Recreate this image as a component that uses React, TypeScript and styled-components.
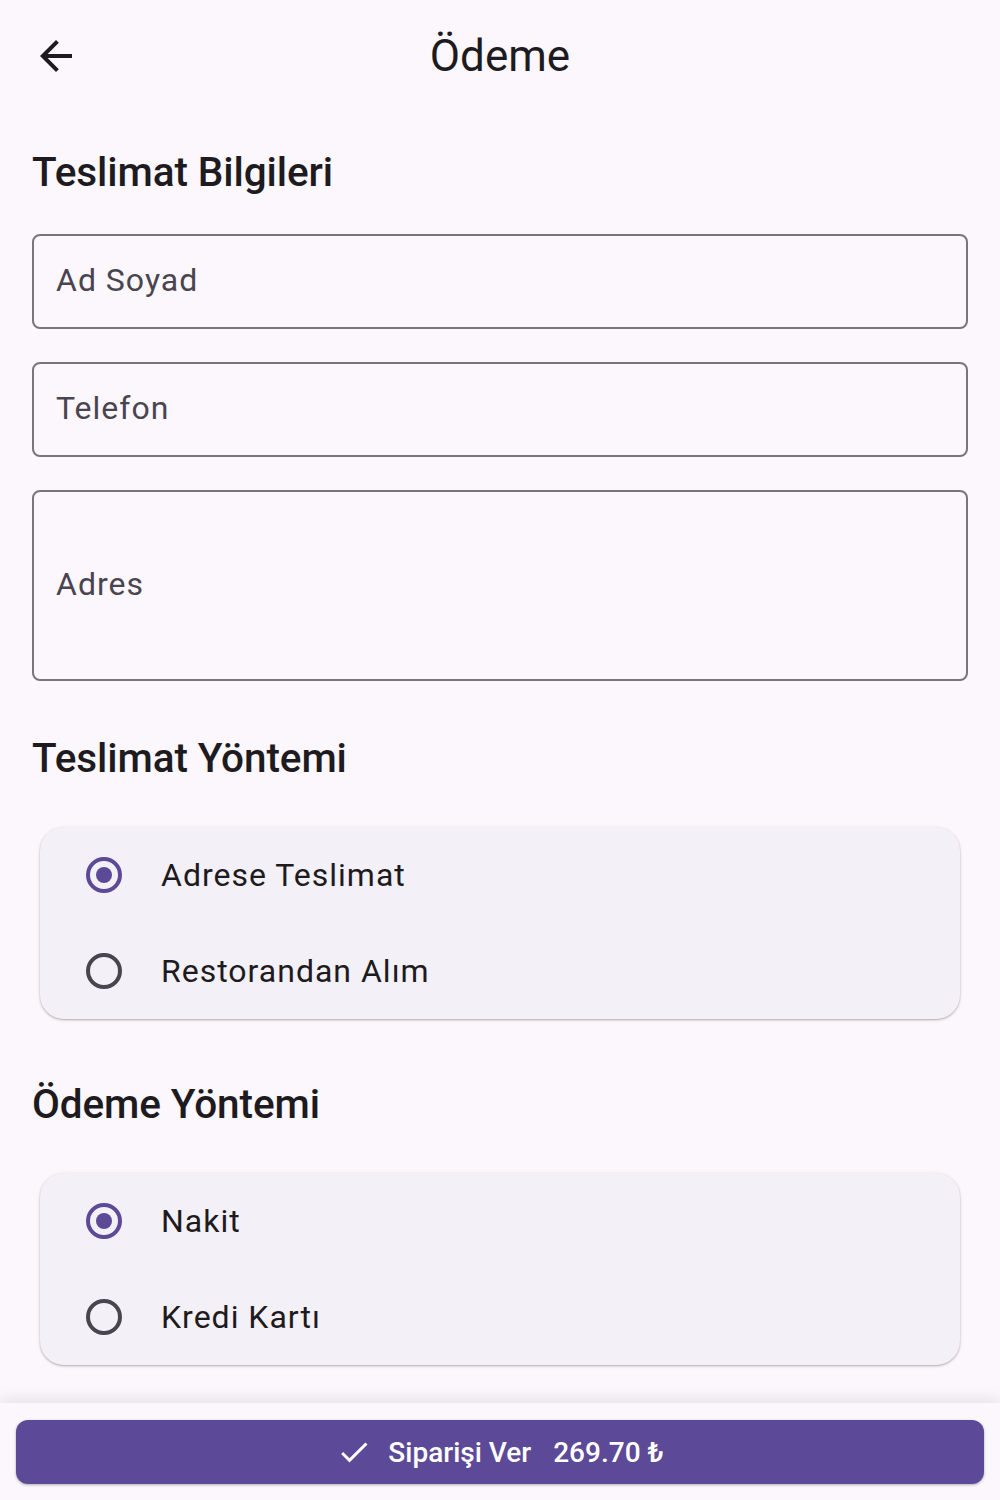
import React, { useState } from 'react';
import styled, { createGlobalStyle } from 'styled-components';

const GlobalStyle = createGlobalStyle`
  html, body {
    margin: 0;
    padding: 0;
    background: #fcf6fd;
  }
  body {
    font-family: Roboto, 'Noto Sans', sans-serif;
    color: #1d1b20;
  }
`;

interface IOption {
  id: string;
  label: string;
}

const deliveryOptions: IOption[] = [
  { id: 'address', label: 'Adrese Teslimat' },
  { id: 'pickup', label: 'Restorandan Alım' },
];

const paymentOptions: IOption[] = [
  { id: 'cash', label: 'Nakit' },
  { id: 'card', label: 'Kredi Kartı' },
];

const BackIcon = () => (
  <svg width="48" height="48" viewBox="0 0 24 24" fill="#1d1b20">
    <path d="M20 11H7.83l5.59-5.59L12 4l-8 8 8 8 1.41-1.41L7.83 13H20v-2z" />
  </svg>
);

const CheckIcon = () => (
  <svg width="36" height="36" viewBox="0 0 24 24" fill="#ffffff">
    <path d="M9 16.17 4.83 12l-1.42 1.41L9 19 21 7l-1.41-1.41z" />
  </svg>
);

const RadioGroup: React.FC<{
  options: IOption[];
  value: string;
  onChange: (id: string) => void;
}> = ({ options, value, onChange }) => {
  return (
    <Card>
      {options.map((o) => (
        <RadioRow key={o.id} onClick={() => onChange(o.id)}>
          <RadioMark selected={o.id === value} />
          <RadioLabel>{o.label}</RadioLabel>
        </RadioRow>
      ))}
    </Card>
  );
};

const App: React.FC = () => {
  const [delivery, setDelivery] = useState('address');
  const [payment, setPayment] = useState('cash');

  return (
    <>
      <GlobalStyle />
      <Screen>
        <AppBar>
          <IconButton>
            <BackIcon />
          </IconButton>
          <AppBarTitle>Ödeme</AppBarTitle>
        </AppBar>

        <Body>
          <SectionTitle first>Teslimat Bilgileri</SectionTitle>
          <FieldGroup>
            <Field>
              <FieldLabel>Ad Soyad</FieldLabel>
            </Field>
            <Field>
              <FieldLabel>Telefon</FieldLabel>
            </Field>
            <Field tall>
              <FieldLabel>Adres</FieldLabel>
            </Field>
          </FieldGroup>

          <SectionTitle>Teslimat Yöntemi</SectionTitle>
          <RadioGroup
            options={deliveryOptions}
            value={delivery}
            onChange={setDelivery}
          />

          <SectionTitle>Ödeme Yöntemi</SectionTitle>
          <RadioGroup
            options={paymentOptions}
            value={payment}
            onChange={setPayment}
          />
        </Body>

        <BottomBar>
          <SubmitButton>
            <CheckIcon />
            <span>Siparişi Ver</span>
            <Price>269.70 ₺</Price>
          </SubmitButton>
        </BottomBar>
      </Screen>
    </>
  );
};

const Screen = styled.div`
  display: flex;
  flex-direction: column;
  width: 1000px;
  height: 1500px;
  background: #fcf6fd;
  overflow: hidden;
`;

const AppBar = styled.header`
  flex-shrink: 0;
  display: flex;
  align-items: center;
  height: 112px;
  padding: 0 16px;
  box-sizing: border-box;
`;

const IconButton = styled.button`
  display: flex;
  align-items: center;
  justify-content: center;
  width: 80px;
  height: 80px;
  padding: 0;
  border: none;
  background: transparent;
  cursor: pointer;
`;

const AppBarTitle = styled.h1`
  flex: 1;
  margin: 0 80px 0 0;
  text-align: center;
  font-size: 44px;
  font-weight: 400;
  line-height: 1;
  color: #1d1b20;
`;

const Body = styled.main`
  flex: 1;
  min-height: 0;
  display: flex;
  flex-direction: column;
  padding: 0 32px;
`;

const SectionTitle = styled.h2<{ first?: boolean }>`
  flex-shrink: 0;
  margin: ${({ first }) => (first ? '38px 0 40px' : '55px 0 39px')};
  font-size: 40.5px;
  font-weight: 500;
  line-height: 44px;
  letter-spacing: -0.1px;
  color: #1d1b20;
`;

const FieldGroup = styled.div`
  display: flex;
  flex-direction: column;
  gap: 33px;
`;

const Field = styled.div<{ tall?: boolean }>`
  display: flex;
  align-items: center;
  height: ${({ tall }) => (tall ? '191px' : '95px')};
  padding: 0 22px 3px;
  box-sizing: border-box;
  border: 2px solid #79747e;
  border-radius: 8px;
`;

const FieldLabel = styled.span`
  font-size: 32px;
  letter-spacing: 1px;
  color: #49454f;
`;

const Card = styled.div`
  flex-shrink: 0;
  display: flex;
  flex-direction: column;
  margin: 8px;
  background: #f4f0f7;
  border-radius: 24px;
  box-shadow: 0 1px 2px rgba(0, 0, 0, 0.25), 0 1px 4px rgba(0, 0, 0, 0.08);
`;

const RadioRow = styled.div`
  display: flex;
  align-items: center;
  gap: 39px;
  height: 96px;
  padding: 0 46px;
  cursor: pointer;
`;

const RadioMark = styled.span<{ selected: boolean }>`
  position: relative;
  width: 36px;
  height: 36px;
  box-sizing: border-box;
  border-radius: 50%;
  border: 4px solid ${({ selected }) => (selected ? '#5c4a98' : '#49454f')};

  &::after {
    content: '';
    position: absolute;
    left: 50%;
    top: 50%;
    width: 16px;
    height: 16px;
    border-radius: 50%;
    background: #5c4a98;
    transform: translate(-50%, -50%);
    display: ${({ selected }) => (selected ? 'block' : 'none')};
  }
`;

const RadioLabel = styled.span`
  font-size: 32px;
  letter-spacing: 1px;
  color: #1d1b20;
`;

const BottomBar = styled.footer`
  flex-shrink: 0;
  display: flex;
  height: 97px;
  padding: 17px 16px 16px;
  box-sizing: border-box;
  background: #fcf6fd;
  box-shadow: 0 -4px 14px rgba(0, 0, 0, 0.09);
`;

const SubmitButton = styled.button`
  flex: 1;
  display: flex;
  align-items: center;
  justify-content: center;
  gap: 16px;
  border: none;
  border-radius: 12px;
  background: #5c4a98;
  color: #ffffff;
  font-family: Roboto, sans-serif;
  font-size: 28px;
  font-weight: 500;
  box-shadow: 0 1px 3px rgba(0, 0, 0, 0.3);
  cursor: pointer;
`;

const Price = styled.span`
  margin-left: 6px;
`;

export default App;
